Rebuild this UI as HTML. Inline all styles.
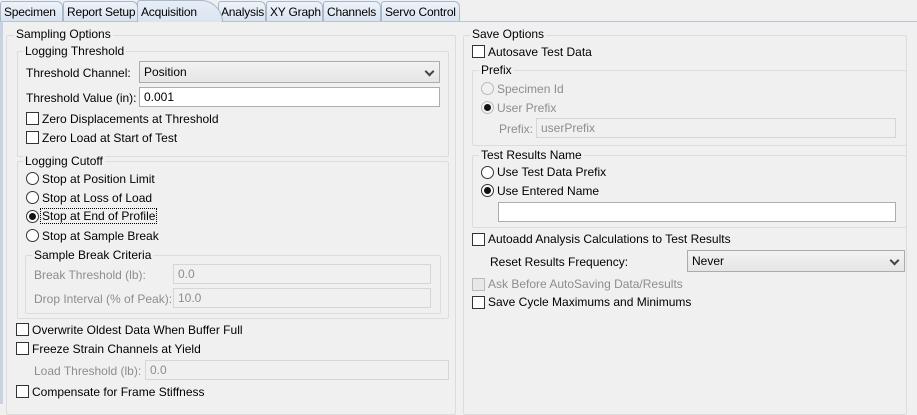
<!DOCTYPE html>
<html><head><style>
*{box-sizing:border-box}
body{margin:0;width:917px;height:404px;background:#f0f0f0;font:12px "Liberation Sans",sans-serif;color:#000;position:relative;overflow:hidden}
.a{position:absolute;white-space:nowrap}
.t{position:absolute;top:1px;height:20px;background:linear-gradient(#eef3f9,#d9e3ee);border:1px solid #a9b7c8;border-bottom:none;border-radius:3px 6px 0 0;padding:3px 0 0 3px;font-size:12px;white-space:nowrap;overflow:hidden;letter-spacing:-0.2px}
.g{position:absolute;border:1px solid #dcdcdc;border-radius:2px}
.gl{position:absolute;background:#f0f0f0;padding:0 2px;line-height:13px}
.cb{position:absolute;width:13px;height:13px;border:1px solid #333;background:#fff}
.rb{position:absolute;width:13px;height:13px;border:1px solid #333;border-radius:50%;background:#fff}
.rb.on::after{content:"";position:absolute;left:2px;top:2px;width:7px;height:7px;border-radius:50%;background:#111}
.in{position:absolute;height:20px;border:1px solid #adadad;background:#fff;padding:2px 4px;line-height:14px}
.dis{color:#8d8d8d}
.in.d{border-color:#d6d6d6;background:#f0f0f0;color:#8d8d8d}
.sel{position:absolute;height:22px;border:1px solid #acacac;background:linear-gradient(#f2f2f2,#e5e5e5);padding:3px 4px;line-height:14px}
.sel::after{content:"";position:absolute;right:6px;top:6px;width:5px;height:5px;border-right:2px solid #444;border-bottom:2px solid #444;transform:rotate(45deg)}
</style></head><body>
<div class="t" style="left:0;width:63px">Specimen</div>
<div class="t" style="left:63px;width:75px">Report Setup</div>
<div class="t" style="left:218px;width:48px;padding-left:2px">Analysis</div>
<div class="t" style="left:266px;width:57px">XY Graph</div>
<div class="t" style="left:323px;width:58px">Channels</div>
<div class="t" style="left:381px;width:79px">Servo Control</div>
<div class="t" style="left:137px;width:86px;border-radius:3px 22px 0 0;background:linear-gradient(#e6eef7,#dbe5f0);z-index:2;top:0;height:22px;padding-top:4px">Acquisition</div>
<div class="a" style="left:0;top:21px;width:917px;height:1px;background:#b6c4d4"></div>
<div class="a" style="left:0;top:22px;width:3px;height:382px;background:#c5d3e4"></div>

<!-- Left -->
<div class="g" style="left:6px;top:35px;width:450px;height:380px"></div>
<div class="gl" style="left:14px;top:28px">Sampling Options</div>
<div class="g" style="left:17px;top:51px;width:432px;height:106px"></div>
<div class="gl" style="left:23px;top:45px">Logging Threshold</div>
<div class="a" style="left:26px;top:66px">Threshold Channel:</div>
<div class="sel" style="left:139px;top:61px;width:301px">Position</div>
<div class="a" style="left:26px;top:91px">Threshold Value (in):</div>
<div class="in" style="left:139px;top:87px;width:301px">0.001</div>
<div class="cb" style="left:26px;top:112px"></div><div class="a" style="left:42px;top:112px">Zero Displacements at Threshold</div>
<div class="cb" style="left:26px;top:131px"></div><div class="a" style="left:42px;top:131px">Zero Load at Start of Test</div>

<div class="g" style="left:17px;top:161px;width:432px;height:158px"></div>
<div class="gl" style="left:23px;top:155px">Logging Cutoff</div>
<div class="rb" style="left:26px;top:172px"></div><div class="a" style="left:42px;top:172px">Stop at Position Limit</div>
<div class="rb" style="left:26px;top:191px"></div><div class="a" style="left:42px;top:191px">Stop at Loss of Load</div>
<div class="rb on" style="left:26px;top:210px"></div><div class="a" style="left:41px;top:209px;outline:1px dotted #000;padding:0 1px">Stop at End of Profile</div>
<div class="rb" style="left:26px;top:229px"></div><div class="a" style="left:42px;top:229px">Stop at Sample Break</div>
<div class="g" style="left:25px;top:255px;width:416px;height:59px"></div>
<div class="gl" style="left:32px;top:249px">Sample Break Criteria</div>
<div class="a dis" style="left:34px;top:268px">Break Threshold (lb):</div>
<div class="in d" style="left:173px;top:264px;width:258px">0.0</div>
<div class="a dis" style="left:34px;top:292px">Drop Interval (% of Peak):</div>
<div class="in d" style="left:173px;top:288px;width:258px">10.0</div>
<div class="cb" style="left:16px;top:323px"></div><div class="a" style="left:32px;top:323px">Overwrite Oldest Data When Buffer Full</div>
<div class="cb" style="left:16px;top:342px"></div><div class="a" style="left:32px;top:342px">Freeze Strain Channels at Yield</div>
<div class="a dis" style="left:34px;top:364px">Load Threshold (lb):</div>
<div class="in d" style="left:145px;top:360px;width:304px">0.0</div>
<div class="cb" style="left:16px;top:385px"></div><div class="a" style="left:32px;top:385px">Compensate for Frame Stiffness</div>

<!-- Right -->
<div class="g" style="left:463px;top:35px;width:444px;height:380px"></div>
<div class="gl" style="left:470px;top:28px">Save Options</div>
<div class="cb" style="left:472px;top:45px"></div><div class="a" style="left:488px;top:45px">Autosave Test Data</div>
<div class="g" style="left:472px;top:70px;width:435px;height:76px"></div>
<div class="gl" style="left:479px;top:64px">Prefix</div>
<div class="rb" style="left:481px;top:82px;border-color:#bbb;background:#f0f0f0"></div><div class="a dis" style="left:497px;top:82px">Specimen Id</div>
<div class="rb on" style="left:481px;top:101px;border-color:#bbb;background:#f0f0f0"></div><div class="a dis" style="left:497px;top:101px">User Prefix</div>
<div class="a dis" style="left:499px;top:122px">Prefix:</div>
<div class="in d" style="left:536px;top:118px;width:360px">userPrefix</div>
<div class="g" style="left:472px;top:155px;width:435px;height:73px"></div>
<div class="gl" style="left:479px;top:149px">Test Results Name</div>
<div class="rb" style="left:481px;top:166px"></div><div class="a" style="left:497px;top:165px">Use Test Data Prefix</div>
<div class="rb on" style="left:481px;top:184px"></div><div class="a" style="left:497px;top:184px">Use Entered Name</div>
<div class="in" style="left:498px;top:202px;width:398px"></div>
<div class="cb" style="left:472px;top:233px"></div><div class="a" style="left:488px;top:232px">Autoadd Analysis Calculations to Test Results</div>
<div class="a" style="left:490px;top:255px">Reset Results Frequency:</div>
<div class="sel" style="left:687px;top:250px;width:218px">Never</div>
<div class="cb" style="left:472px;top:278px;border-color:#bbb;background:#e8e8e8"></div><div class="a dis" style="left:488px;top:277px">Ask Before AutoSaving Data/Results</div>
<div class="cb" style="left:472px;top:296px"></div><div class="a" style="left:488px;top:295px">Save Cycle Maximums and Minimums</div>
</body></html>
